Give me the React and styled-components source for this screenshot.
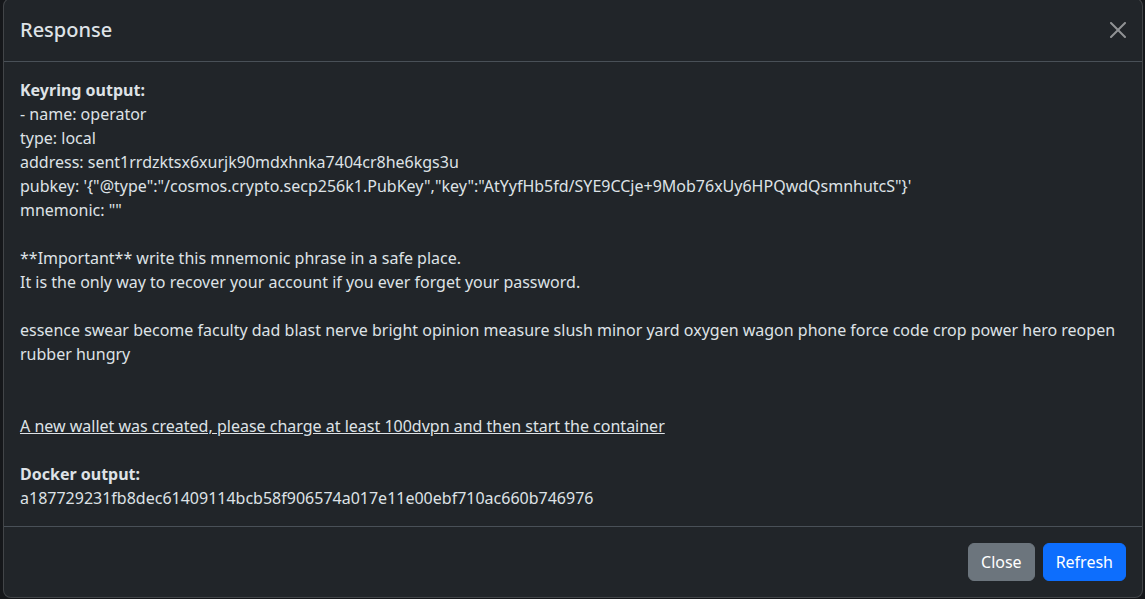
import React from "react";
import styled, { createGlobalStyle } from "styled-components";

const GlobalStyle = createGlobalStyle`
  html, body {
    margin: 0;
    padding: 0;
    height: 100%;
    overflow: hidden;
    background: #15171a;
  }
  body {
    font-family: "Noto Sans", "Open Sans", sans-serif;
    color: #dee2e6;
  }
`;

const keyringLines = [
  "- name: operator",
  "type: local",
  "address: sent1rrdzktsx6xurjk90mdxhnka7404cr8he6kgs3u",
  `pubkey: '{"@type":"/cosmos.crypto.secp256k1.PubKey","key":"AtYyfHb5fd/SYE9CCje+9Mob76xUy6HPQwdQsmnhutcS"}'`,
  'mnemonic: ""',
  "",
  "**Important** write this mnemonic phrase in a safe place.",
  "It is the only way to recover your account if you ever forget your password.",
  "",
  "essence swear become faculty dad blast nerve bright opinion measure slush minor yard oxygen wagon phone force code crop power hero reopen rubber hungry",
  "",
  "",
];

const App = () => {
  return (
    <>
      <GlobalStyle />
      <Backdrop>
        <Dialog>
          <Header>
            <Title>Response</Title>
            <CloseX aria-label="Close">
              <svg viewBox="0 0 16 16" width="16" height="16">
                <path
                  fill="#fff"
                  d="M.293.293a1 1 0 0 1 1.414 0L8 6.586 14.293.293a1 1 0 1 1 1.414 1.414L9.414 8l6.293 6.293a1 1 0 0 1-1.414 1.414L8 9.414l-6.293 6.293a1 1 0 0 1-1.414-1.414L6.586 8 .293 1.707a1 1 0 0 1 0-1.414"
                />
              </svg>
            </CloseX>
          </Header>

          <Body>
            <Label>Keyring output:</Label>
            {keyringLines.map((line, index) => (
              <Line key={index}>{line}</Line>
            ))}
            <Line>
              <Notice>
                A new wallet was created, please charge at least 100dvpn and
                then start the container
              </Notice>
            </Line>
            <Line />
            <Label>Docker output:</Label>
            <Line>
              a187729231fb8dec61409114bcb58f906574a017e11e00ebf710ac660b746976
            </Line>
          </Body>

          <Footer>
            <Button $variant="secondary">Close</Button>
            <Button $variant="primary">Refresh</Button>
          </Footer>
        </Dialog>
      </Backdrop>
    </>
  );
};

const Backdrop = styled.div`
  height: 100vh;
  overflow: hidden;
`;

const Dialog = styled.div`
  width: 1140px;
  margin: -2px 0 0 3px;
  box-sizing: border-box;
  background: #212529;
  border: 1px solid rgba(255, 255, 255, 0.15);
  border-radius: 8px;
  display: flex;
  flex-direction: column;
`;

const Header = styled.div`
  display: flex;
  align-items: center;
  justify-content: space-between;
  padding: 16px;
  border-bottom: 1px solid #495057;
`;

const Title = styled.h5`
  margin: 0;
  font-size: 20px;
  font-weight: 500;
  line-height: 30px;
`;

const CloseX = styled.button`
  box-sizing: content-box;
  width: 16px;
  height: 16px;
  padding: 8px;
  margin: -8px -8px -8px auto;
  border: 0;
  background: transparent;
  opacity: 0.5;
  display: flex;
  align-items: center;
  justify-content: center;
  svg {
    display: block;
  }
`;

const Body = styled.div`
  padding: 16px;
  font-size: 16px;
  line-height: 24px;
`;

const Label = styled.div`
  font-weight: 700;
`;

const Line = styled.div`
  min-height: 24px;
`;

const Notice = styled.span`
  text-decoration: underline;
`;

const Footer = styled.div`
  display: flex;
  justify-content: flex-end;
  align-items: center;
  padding: 12px;
  border-top: 1px solid #495057;
`;

const Button = styled.button`
  margin: 4px;
  padding: 6px 12px;
  font-family: inherit;
  font-size: 16px;
  line-height: 24px;
  color: #fff;
  border-radius: 6px;
  border: 1px solid
    ${(p) => (p.$variant === "primary" ? "#0d6efd" : "#6c757d")};
  background: ${(p) => (p.$variant === "primary" ? "#0d6efd" : "#6c757d")};
`;

export default App;
